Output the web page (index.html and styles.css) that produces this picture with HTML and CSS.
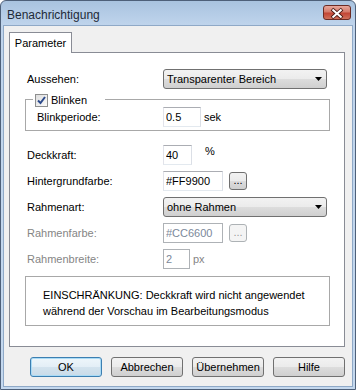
FILE: index.html
```html
<!DOCTYPE html>
<html lang="de">
<head>
  <meta charset="UTF-8" />
  <meta name="viewport" content="width=device-width, initial-scale=1.0"/>
  <title>Benachrichtigung</title>
  <link rel="stylesheet" href="styles.css">
</head>
<body>
  <div class="window">
    <div class="titlebar">
      <span class="title">Benachrichtigung</span>
      <button class="close-btn" aria-label="Schließen">
        <svg width="28" height="15" viewBox="0 0 28 15">
          <path d="M10 4 L18 11 M18 4 L10 11" stroke="#4a1a14" stroke-width="4" stroke-linecap="square" fill="none"/>
          <path d="M10 4 L18 11 M18 4 L10 11" stroke="#ffffff" stroke-width="2.2" stroke-linecap="square" fill="none"/>
        </svg>
      </button>
    </div>

    <div class="client">
      <div class="tabs">
        <div class="tab active">Parameter</div>
      </div>

      <div class="tab-panel">
        <div class="row first">
          <label class="lbl">Aussehen:</label>
          <div class="combo">
            <span>Transparenter Bereich</span>
            <svg class="arrow" width="7" height="4" viewBox="0 0 7 4"><polygon points="0,0 7,0 3.5,4" fill="#000"/></svg>
          </div>
        </div>

        <fieldset class="group">
          <legend>
            <span class="legend-inner">
              <span class="check">
                <svg width="11" height="11" viewBox="0 0 11 11"><path d="M2 5.5 L4.5 8 L9 2" stroke="#2c4a8c" stroke-width="2" fill="none"/></svg>
              </span>
              Blinken
            </span>
          </legend>
          <div class="row group-row">
            <label class="lbl lbl-inner">Blinkperiode:</label>
            <input class="txt w-blink" type="text" value="0.5">
            <span class="unit u-sek">sek</span>
          </div>
        </fieldset>

        <div class="row after-group">
          <label class="lbl">Deckkraft:</label>
          <input class="txt w-opacity" type="text" value="40">
          <span class="unit u-pct">%</span>
        </div>

        <div class="row">
          <label class="lbl">Hintergrundfarbe:</label>
          <input class="txt w-color" type="text" value="#FF9900">
          <button class="dots">...</button>
        </div>

        <div class="row">
          <label class="lbl">Rahmenart:</label>
          <div class="combo">
            <span>ohne Rahmen</span>
            <svg class="arrow" width="7" height="4" viewBox="0 0 7 4"><polygon points="0,0 7,0 3.5,4" fill="#000"/></svg>
          </div>
        </div>

        <div class="row disabled">
          <label class="lbl">Rahmenfarbe:</label>
          <input class="txt w-color" type="text" value="#CC6600" disabled>
          <button class="dots" disabled>...</button>
        </div>

        <div class="row disabled">
          <label class="lbl">Rahmenbreite:</label>
          <input class="txt w-width" type="text" value="2" disabled>
          <span class="unit u-px">px</span>
        </div>

        <div class="info">
          EINSCHRÄNKUNG: Deckkraft wird nicht angewendet<br>
          während der Vorschau im Bearbeitungsmodus
        </div>
      </div>

      <div class="buttons">
        <button class="btn default">OK</button>
        <button class="btn">Abbrechen</button>
        <button class="btn">Übernehmen</button>
        <button class="btn">Hilfe</button>
      </div>
    </div>
  </div>
</body>
</html>
```

FILE: styles.css
```css
* {
    box-sizing: border-box;
}
body {
    margin: 0;
    font-family: "Liberation Sans", Arial, sans-serif;
    font-size: 11px;
    color: #000;
    background-color: #ffffff;
}
.window {
    width: 356px;
    height: 390px;
    display: flex;
    flex-direction: column;
    padding: 0 2px 2px;
    border: 1px solid #4e6079;
    border-radius: 6px 6px 0 0;
    background: linear-gradient(to bottom, #a9c3df 0, #bfd4ec 24px, #c4d8ee 100%);
}
.titlebar {
    height: 24px;
    display: flex;
    justify-content: space-between;
    align-items: flex-start;
}
.title {
    margin: 7px 0 0 4px;
    font-size: 12px;
    line-height: 15px;
    color: #1e2a38;
}
.close-btn {
    width: 28px;
    height: 15px;
    margin: 4px 2px 0 0;
    padding: 0;
    border: 1px solid #6b2b24;
    border-radius: 3px;
    background: linear-gradient(to bottom, #e8a89c 0, #d47a6a 45%, #c24535 55%, #d0705a 100%);
    display: flex;
}
.client {
    flex: 1;
    display: flex;
    flex-direction: column;
    padding: 6px 7px 0 5px;
    border: 1px solid #8fa9c7;
    background-color: #f0f0f0;
}
.tabs {
    display: flex;
    position: relative;
    z-index: 1;
    margin-bottom: -1px;
}
.tab {
    width: 63px;
    height: 21px;
    line-height: 20px;
    text-align: center;
    border: 1px solid #898c95;
    border-bottom: none;
    background-color: #ffffff;
}
.tab-panel {
    padding: 16px 14px 20px 15px;
    border: 1px solid #898c95;
    background-color: #ffffff;
}
.row {
    height: 20px;
    display: flex;
    align-items: center;
    padding-left: 2px;
    margin-top: 6px;
}
.row.first,
.row.group-row {
    margin-top: 0;
}
.row.after-group {
    margin-top: 14px;
}
.lbl {
    width: 136px;
    flex-shrink: 0;
}
.lbl-inner {
    width: 126px;
}
.group {
    margin: 2px 0 0;
    padding: 0 10px 3px 9px;
    border: 1px solid #a8a8a8;
    min-width: 0;
}
.group legend {
    padding: 3px 18px 0 2px;
    margin-left: -2px;
}
.legend-inner {
    display: flex;
    align-items: center;
    gap: 3px;
    line-height: 13px;
}
.check {
    width: 13px;
    height: 13px;
    border: 1px solid #8e8f8f;
    background: linear-gradient(to bottom right, #dedede, #fbfbfb);
    display: flex;
    align-items: center;
    justify-content: center;
}
.combo {
    width: 164px;
    height: 20px;
    display: flex;
    align-items: center;
    justify-content: space-between;
    padding: 0 4px 0 3px;
    border: 1px solid #707070;
    border-radius: 3px;
    background: linear-gradient(to bottom, #f2f2f2 0, #ebebeb 50%, #dddddd 50%, #cfcfcf 100%);
}
.txt {
    height: 20px;
    margin: 0;
    padding: 0 2px;
    font-family: inherit;
    font-size: 11px;
    color: #000;
    border: 1px solid;
    border-color: #abadb3 #dbdfe6 #e3e9ef #e2e3ea;
    background-color: #ffffff;
    outline: none;
}
.txt:disabled {
    color: #7b889a;
    border-color: #aeb2b6;
    background-color: #ffffff;
}
.w-blink {
    width: 38px;
}
.w-opacity {
    width: 29px;
}
.w-color {
    width: 60px;
}
.w-width {
    width: 27px;
}
.unit {
    margin-left: 3px;
}
.u-pct {
    margin-left: 13px;
    align-self: flex-start;
    line-height: 13px;
}
.dots {
    width: 18px;
    height: 18px;
    margin-left: 6px;
    padding: 0 0 2px;
    font-family: inherit;
    font-size: 11px;
    line-height: 14px;
    color: #000;
    border: 1px solid #707070;
    border-radius: 3px;
    background: linear-gradient(to bottom, #f2f2f2 0, #ebebeb 50%, #dddddd 50%, #cfcfcf 100%);
}
.dots:disabled {
    color: #9a9a9a;
    border-color: #adb2b5;
    background: #f4f4f4;
}
.disabled .lbl,
.disabled .unit {
    color: #858585;
}
.info {
    margin-top: 7px;
    padding: 10px 8px 6px 17px;
    line-height: 16px;
    border: 1px solid #a8a8a8;
}
.buttons {
    display: flex;
    justify-content: flex-end;
    gap: 9px;
    margin-top: 10px;
}
.btn {
    width: 72px;
    height: 20px;
    padding: 0;
    font-family: inherit;
    font-size: 11px;
    color: #000;
    border: 1px solid #707070;
    border-radius: 3px;
    background: linear-gradient(to bottom, #f2f2f2 0, #ebebeb 50%, #dddddd 50%, #cfcfcf 100%);
}
.btn.default {
    border-color: #3c7fb1;
    box-shadow: inset 0 0 0 1px #a9dbf6;
    background: linear-gradient(to bottom, #eef6fb 0, #e3eef6 50%, #d3e3ee 50%, #c9dbe8 100%);
}
```
